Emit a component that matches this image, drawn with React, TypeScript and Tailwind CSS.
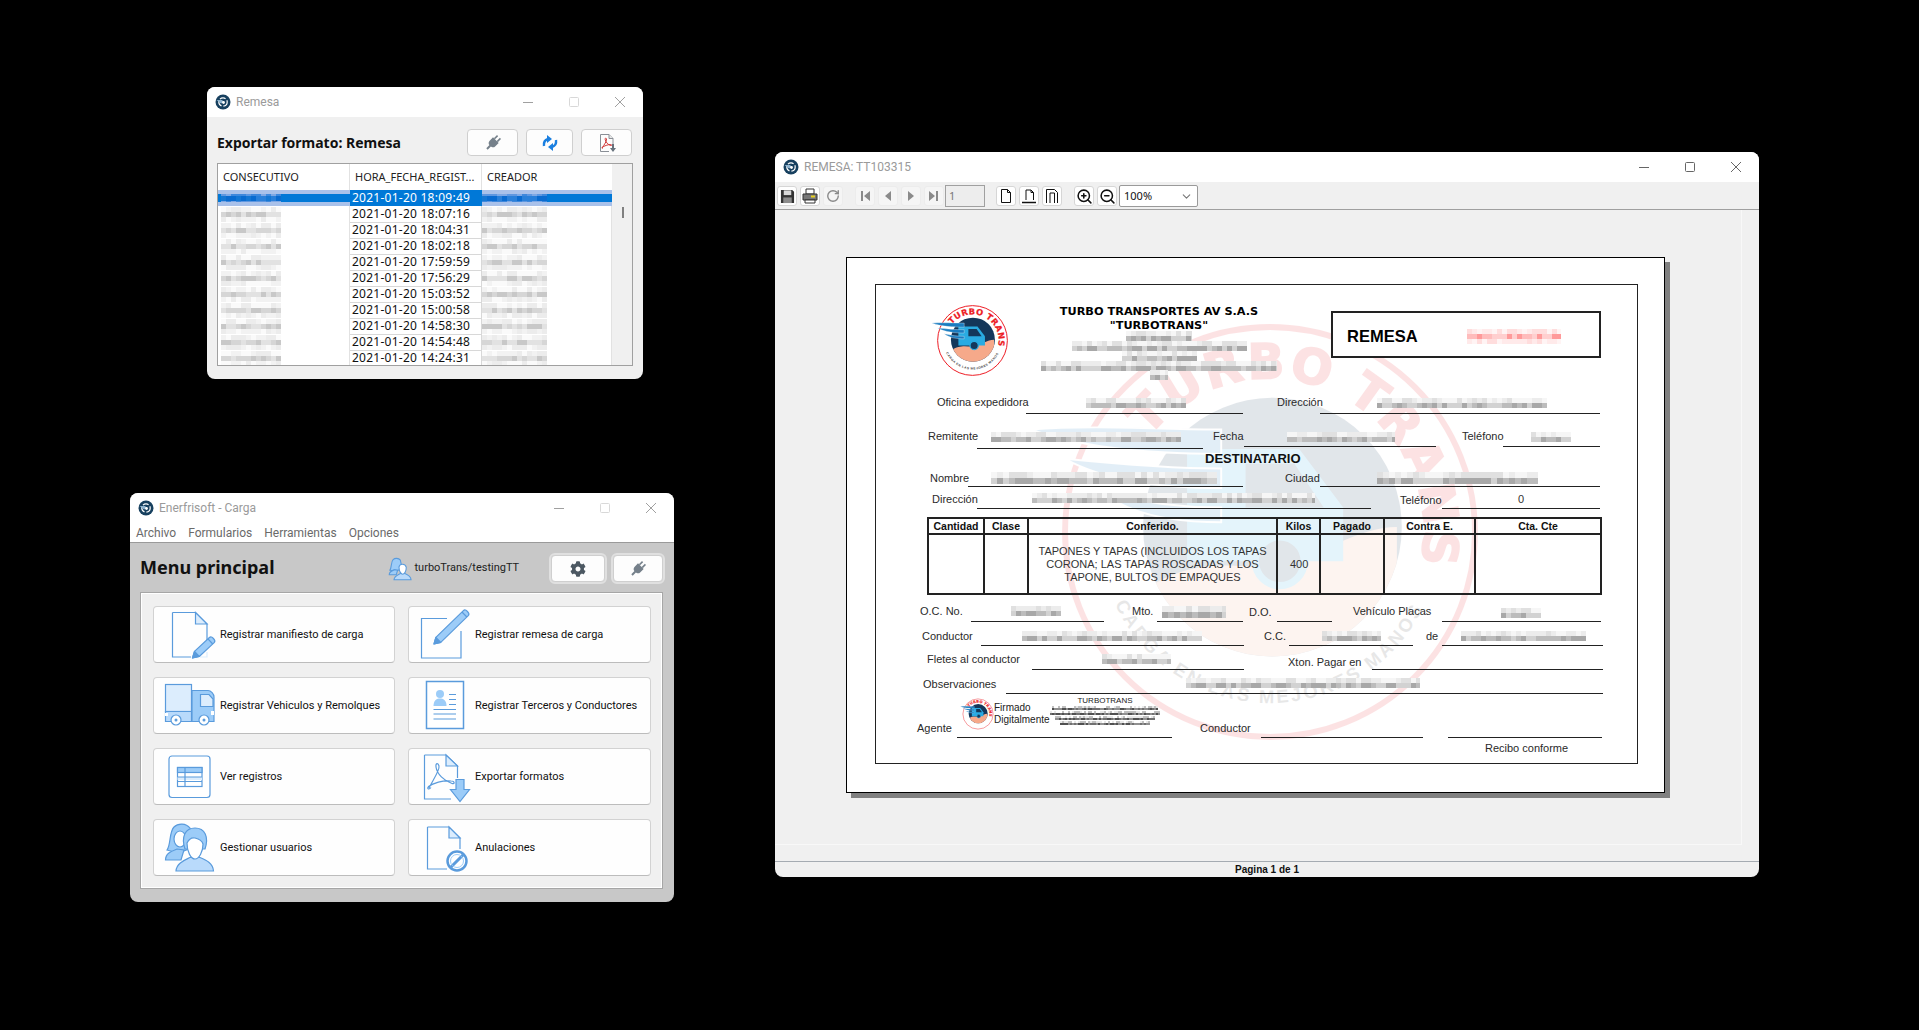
import React from "react";
import { ChevronDown, RotateCw, ZoomIn, ZoomOut } from "lucide-react";
import { FaCog } from "react-icons/fa";

const S = "#5a9bdc";
const M = "#9cccf8";
const P = "#dcedfd";

const dates = [
  "2021-01-20 18:09:49",
  "2021-01-20 18:07:16",
  "2021-01-20 18:04:31",
  "2021-01-20 18:02:18",
  "2021-01-20 17:59:59",
  "2021-01-20 17:56:29",
  "2021-01-20 15:03:52",
  "2021-01-20 15:00:58",
  "2021-01-20 14:58:30",
  "2021-01-20 14:54:48",
  "2021-01-20 14:24:31",
];

const palettes: Record<string, string[]> = {
  gray: ["#f6f6f6", "#ececec", "#e0e0e0", "#d2d2d2", "#bcbcbc", "#a8a8a8"],
  pale: ["#fafafa", "#f2f2f2", "#ececec", "#e2e2e2", "#d6d6d6", "#c8c8c8"],
  red: ["#fff4f4", "#ffeaea", "#ffdddd", "#ffcfcf", "#ffbcbc", "#ff9a9a"],
  blue: ["#7fa8e4", "#5f97e0", "#3f88dc", "#2a80da", "#1577d4", "#0a6bd0"],
  ink: ["#ffffff", "#e8e8e8", "#c0c0c0", "#909090", "#707070", "#505050"],
};

// stands in for the pixelated (censored) fields of the screenshot
const Blur = ({
  w,
  h = 10,
  cell = 5,
  tone = "gray",
  seed = 1,
  className = "",
}: {
  w: number;
  h?: number;
  cell?: number;
  tone?: string;
  seed?: number;
  className?: string;
}) => {
  const cols = Math.ceil(w / cell);
  const rows = Math.ceil(h / cell);
  const colors = palettes[tone];
  const mid = Math.floor(rows / 2);
  const cells = [];
  for (let r = 0; r < rows; r++) {
    for (let c = 0; c < cols; c++) {
      const n = Math.abs(Math.sin((c + 1) * 12.9898 + (r + 1) * 78.233 + seed * 37.7) * 43758.5453) % 1;
      const i = Math.min(5, Math.floor(n * 3) + (r === mid ? 3 : 0));
      cells.push(<rect key={`${r}-${c}`} x={c * cell} y={r * cell} width={cell} height={cell} fill={colors[i]} />);
    }
  }
  return (
    <svg width={w} height={h} className={`block shrink-0 ${className}`}>
      {cells}
    </svg>
  );
};

const AppIcon = () => (
  <svg viewBox="0 0 16 16" className="w-4 h-4 shrink-0">
    <circle cx="8" cy="8" r="7.5" fill="#17405f" />
    <circle cx="8" cy="8" r="4.2" fill="none" stroke="#ffffff" strokeWidth="1.2" strokeDasharray="6 2" />
    <path d="M1.5 6 H7 L9 8 L6 9.5 Z" fill="#8fb4d0" />
    <circle cx="8.5" cy="8.5" r="1.4" fill="#ffffff" />
  </svg>
);

const Controls = ({ dim = false }: { dim?: boolean }) => (
  <div className={`flex ml-auto ${dim ? "text-[#a0a0a0]" : "text-[#666666]"}`}>
    <div className="w-[46px] flex items-center justify-center">
      <svg width="10" height="10" stroke="currentColor">
        <path d="M0 5.5 H10" />
      </svg>
    </div>
    <div className="w-[46px] flex items-center justify-center">
      <svg width="10" height="10" stroke="currentColor" fill="none" className={dim ? "opacity-40" : ""}>
        <rect x="0.5" y="0.5" width="9" height="9" rx="1" />
      </svg>
    </div>
    <div className="w-[46px] flex items-center justify-center">
      <svg width="10" height="10" stroke="currentColor">
        <path d="M0 0 L10 10 M10 0 L0 10" />
      </svg>
    </div>
  </div>
);

const TitleBar = ({ title, dim }: { title: string; dim?: boolean }) => (
  <div className="h-[30px] shrink-0 bg-white flex items-center pl-2">
    <AppIcon />
    <span className="ml-[5px] text-xs text-[#9a9a9a] font-['Roboto',sans-serif]">{title}</span>
    <Controls dim={dim} />
  </div>
);

const PlugIcon = () => (
  <svg viewBox="0 0 18 18" className="w-[18px] h-[18px]">
    <g transform="rotate(45 9 9)" fill="#75808a">
      <rect x="6.2" y="0.5" width="1.6" height="4.5" />
      <rect x="10.2" y="0.5" width="1.6" height="4.5" />
      <path d="M5 5 H13 V10 C13 12 11 13 10 13 V17.5 H8 V13 C7 13 5 12 5 10 Z" />
    </g>
  </svg>
);

const SyncIcon = () => (
  <svg viewBox="0 0 18 18" className="w-[18px] h-[18px]">
    <path d="M3 12 C2.5 8.5 4 6 7 5" fill="none" stroke="#1a7fe0" strokeWidth="2.4" />
    <path d="M6 1 L11 5 L6 9 Z" fill="#1a7fe0" />
    <path d="M15 6 C15.5 9.5 14 12 11 13" fill="none" stroke="#1a7fe0" strokeWidth="2.4" />
    <path d="M12 17 L7 13 L12 9 Z" fill="#1a7fe0" />
  </svg>
);

const PdfSmallIcon = () => (
  <svg viewBox="0 0 20 20" className="w-5 h-5">
    <path d="M3.5 1.5 H12 L16 5.5 V11 M3.5 1.5 V18.5 H12" fill="none" stroke="#8a8f96" />
    <path d="M12 1.5 V5.5 H16" fill="#e8e8e8" stroke="#8a8f96" />
    <path d="M5 15 C7 12 10 8 9.5 6 C9 4.5 8 5 8.2 6.5 C8.7 9 11 12 14 12.5 C15 12.7 15 11.5 13.5 11.5 C11 11.5 7 13 5.5 14.2 C4.6 15 5 15.8 5.8 15" fill="none" stroke="#d23a3a" strokeWidth="1" />
    <path d="M15 11 H17 V15 H19 L16 19 L13 15 H15 Z" fill="#67727c" />
  </svg>
);

const SmallButton = ({ className, outlined, children }: { className: string; outlined?: boolean; children: React.ReactNode }) => (
  <div className={`h-[27px] bg-[#fdfdfd] border border-[#cfcfcf] rounded-[4px] flex items-center justify-center ${outlined ? "outline-2 outline-[#e0e0e0]" : ""} ${className}`}>
    {children}
  </div>
);

const RemesaList = () => (
  <div className="absolute left-[207px] top-[87px] w-[436px] h-[292px] rounded-lg overflow-hidden bg-[#f0f0f0] flex flex-col">
    <TitleBar title="Remesa" dim />
    <div className="h-[27px] mt-3 pl-[10px] pr-[11px] flex items-center">
      <h2 className="text-sm font-bold text-[#111111]">Exportar formato: Remesa</h2>
      <SmallButton className="w-[51px] ml-auto">
        <PlugIcon />
      </SmallButton>
      <SmallButton className="w-[47px] ml-2">
        <SyncIcon />
      </SmallButton>
      <SmallButton className="w-[51px] ml-2">
        <PdfSmallIcon />
      </SmallButton>
    </div>
    <div className="mt-[7px] mx-[10px] h-[203px] border border-[#a0a0a0] flex overflow-hidden">
      <div className="w-[394px] bg-white">
        <div className="h-[26px] grid grid-cols-[132px_132px_130px] text-[11px] text-[#222222]">
          <div className="border-r border-[#e2e2e2] pl-[5px] flex items-center">CONSECUTIVO</div>
          <div className="border-r border-[#e2e2e2] pl-[5px] flex items-center">HORA_FECHA_REGIST...</div>
          <div className="pl-[5px] flex items-center">CREADOR</div>
        </div>
        {dates.map((d, i) => (
          <div key={d} className="h-4 grid grid-cols-[132px_132px_130px] text-xs tracking-[0.25px] text-[#111111]">
            <div className={i === 0 ? "bg-[#0078d7] border-y-4 border-[#a9c1ea] flex items-center pl-[3px] overflow-hidden" : "border-r border-[#e2e2e2] pl-[3px] flex items-center overflow-hidden"}>
              <Blur w={60} h={15} seed={i + 2} tone={i === 0 ? "blue" : "pale"} />
            </div>
            <div className={i === 0 ? "bg-[#0078d7] text-white pl-[2px] flex items-center" : "border-r border-b border-[#d8d8d8] pl-[2px] flex items-center"}>{d}</div>
            <div className={i === 0 ? "bg-[#0078d7] border-y-4 border-[#a9c1ea] flex items-center overflow-hidden" : "flex items-center overflow-hidden border-r border-[#e2e2e2]"}>
              <Blur w={65} h={15} seed={i + 20} tone={i === 0 ? "blue" : "pale"} />
            </div>
          </div>
        ))}
      </div>
      <div className="flex-1 bg-[#f0f0f0] pt-[43px] pl-[10px]">
        <div className="w-[2px] h-[11px] bg-[#808080]" />
      </div>
    </div>
  </div>
);

const Pencil = ({ x1, y1, x2, y2 }: { x1: number; y1: number; x2: number; y2: number }) => {
  const len = Math.hypot(x2 - x1, y2 - y1);
  const angle = (Math.atan2(y2 - y1, x2 - x1) * 180) / Math.PI;
  return (
    <g transform={`translate(${x1} ${y1}) rotate(${angle})`} stroke={S} strokeLinejoin="round">
      <path d={`M0 0 L6 -3.5 H${len - 3} C${len} -3.5 ${len} 3.5 ${len - 3} 3.5 H6 Z`} fill={M} />
      <path d="M0 0 L6 -3.5 V3.5 Z" fill={S} />
      <path d={`M${len - 5} -3.5 V3.5`} fill="none" />
    </g>
  );
};

const CardSvg = ({ children }: { children: React.ReactNode }) => (
  <svg viewBox="0 0 66 57" className="w-[66px] h-[57px] shrink-0" fill="none" strokeWidth="1.2">
    {children}
  </svg>
);

const ManifestIcon = () => (
  <CardSvg>
    <path d="M18.5 6.5 H41.5 L53 18 V36 M18.5 6.5 V51 H37" stroke={S} />
    <path d="M41.5 6.5 V18 H53 Z" fill={P} stroke={S} />
    <path d="M53 46 V51 H46" stroke={P} />
    <Pencil x1={38.5} y1={52} x2={60} y2={32} />
  </CardSvg>
);

const NoteIcon = () => (
  <CardSvg>
    <path d="M38 12.5 H12.5 V52 H52 V25" stroke={S} />
    <Pencil x1={25} y1={38} x2={59} y2={5} />
  </CardSvg>
);

const TruckIcon = () => (
  <CardSvg>
    <rect x="11.5" y="7.5" width="26" height="27" fill={P} stroke={S} />
    <path d="M11.5 34.5 H37.5 V44.5 H11.5 Z" fill="#b9dafb" stroke={S} />
    <path d="M38 13.5 H54 C57 13.5 60 17 60 20 V44.5 H38 Z" fill={M} stroke={S} />
    <path d="M46.5 17.5 H55 L59 22 V29.5 H46.5 Z" fill={P} stroke={S} />
    <rect x="11" y="36" width="3" height="3" fill="#ffffff" />
    <rect x="57" y="34" width="3" height="4" fill="#ffffff" />
    <circle cx="22" cy="43" r="5" fill="#ffffff" stroke={S} />
    <circle cx="22" cy="43" r="1.5" fill={S} />
    <circle cx="50" cy="43" r="5" fill="#ffffff" stroke={S} />
    <circle cx="50" cy="43" r="1.5" fill={S} />
  </CardSvg>
);

const ThirdPartyIcon = () => (
  <CardSvg>
    <rect x="17.5" y="4.5" width="37" height="47" fill="#ffffff" stroke={S} strokeWidth="1.5" />
    <circle cx="31" cy="17" r="4" fill={M} />
    <path d="M24.5 29 C24.5 23 28 21.5 31 21.5 C34 21.5 37.5 23 37.5 29 Z" fill={M} />
    <path d="M40 17.5 H47 M40 22.5 H47 M40 27.5 H47 M24.5 32.5 H47 M24.5 37 H47 M24.5 42 H47" stroke={S} />
  </CardSvg>
);

const TableIcon = () => (
  <CardSvg>
    <rect x="15" y="8" width="41" height="41.5" rx="3" fill="#ffffff" stroke={S} />
    <rect x="23.5" y="19.5" width="24.5" height="19" fill="#ffffff" stroke={S} />
    <rect x="23.5" y="19.5" width="24.5" height="5" fill={M} stroke={S} />
    <rect x="23.5" y="29" width="24.5" height="3" fill={P} />
    <path d="M31 19.5 V38.5 M23.5 29 H48 M23.5 33.5 H48" stroke={S} />
  </CardSvg>
);

const ExportIcon = () => (
  <CardSvg>
    <path d="M15.5 7 H37 L48.5 18 V30 M15.5 7 V51 H42" stroke={S} />
    <path d="M37 7 V18 H48.5 Z" fill={P} stroke={S} />
    <path d="M20 40 C24 32 31 22 30 18 C29 14.5 26.5 15 27 19 C28 26 35 33 43 35.5 C46 36.5 46 33 42 33 C34 32 24 35 19.5 38.5 C17.5 41 20 42 22 39.5" stroke={S} />
    <path d="M47 31.5 H55 V41.5 H60.5 L51 53.5 L41.5 41.5 H47 Z" fill={M} stroke={S} />
  </CardSvg>
);

const UsersIcon = () => (
  <CardSvg>
    <path d="M13 31 C17 26 15 13 20 8 C24 4 32 4 36 9 L40 28 L24 34 Z" fill={M} stroke={S} />
    <ellipse cx="26" cy="20" rx="6" ry="8" fill="#ffffff" stroke={S} />
    <path d="M11.5 41 C11.5 34 18 32 23 30 L30 31 L27 41 Z" fill={M} stroke={S} />
    <path d="M22 52 C22.5 44 31 41 36 38.5 H46 C52 41 59 44 59.5 52 Z" fill="#b9dafb" stroke={S} />
    <path d="M31 30 C27 18 31 9 41 9 C51 9 55 18 51 30 Z" fill={M} stroke={S} />
    <path d="M33 24 C35 20 37 18 41 19 C45 20 48 21 49 25 C49 33 45 40 41 40 C37 40 33 33 33 24 Z" fill="#ffffff" stroke={S} />
  </CardSvg>
);

const CancelIcon = () => (
  <CardSvg>
    <path d="M18.5 8 H40 L51 19 V30 M18.5 8 V50 H38" stroke={S} />
    <path d="M40 8 V19 H51 Z" fill={P} stroke={S} />
    <circle cx="48" cy="42" r="9.5" fill="#ffffff" stroke={S} strokeWidth="2.5" />
    <path d="M42 48 L54 36" stroke={S} strokeWidth="3" />
    <circle cx="48" cy="42" r="6.5" fill="none" stroke={M} strokeWidth="1" />
  </CardSvg>
);

const menuCards = [
  { label: "Registrar manifiesto de carga", icon: <ManifestIcon /> },
  { label: "Registrar remesa de carga", icon: <NoteIcon /> },
  { label: "Registrar Vehiculos y Remolques", icon: <TruckIcon /> },
  { label: "Registrar Terceros y Conductores", icon: <ThirdPartyIcon /> },
  { label: "Ver registros", icon: <TableIcon /> },
  { label: "Exportar formatos", icon: <ExportIcon /> },
  { label: "Gestionar usuarios", icon: <UsersIcon /> },
  { label: "Anulaciones", icon: <CancelIcon /> },
];

const UserSmallIcon = () => (
  <svg viewBox="0 0 66 57" className="w-[30px] h-[26px]" fill="none" strokeWidth="2.4">
    <path d="M13 31 C17 26 15 13 20 8 C24 4 32 4 36 9 L40 28 L24 34 Z" fill={M} stroke={S} />
    <path d="M11.5 41 C11.5 34 18 32 23 30 L30 31 L27 41 Z" fill={M} stroke={S} />
    <path d="M22 52 C22.5 44 31 41 36 38.5 H46 C52 41 59 44 59.5 52 Z" fill="#b9dafb" stroke={S} />
    <path d="M33 24 C35 16 47 16 49 25 C49 33 45 40 41 40 C37 40 33 33 33 24 Z" fill="#ffffff" stroke={S} />
  </svg>
);

const MainMenu = () => (
  <div className="absolute left-[130px] top-[493px] w-[544px] h-[409px] rounded-lg overflow-hidden bg-[#c8c8c8] flex flex-col">
    <TitleBar title="Enerfrisoft - Carga" dim />
    <div className="h-[20px] pt-px bg-white border-b border-[#9a9a9a] shrink-0 flex items-center text-xs text-[#6a6a6a] pl-[6px] gap-[12px] font-['Roboto',sans-serif]">
      <span>Archivo</span>
      <span>Formularios</span>
      <span>Herramientas</span>
      <span>Opciones</span>
    </div>
    <div className="h-[27px] mt-3 pl-[11px] pr-[11px] flex items-center">
      <h1 className="text-lg font-bold text-[#111111] mb-[3px] -ml-px">Menu principal</h1>
      <div className="ml-[109px]">
        <UserSmallIcon />
      </div>
      <span className="ml-px text-[11px] text-[#222222] font-['Roboto',sans-serif]">turboTrans/testingTT</span>
      <SmallButton outlined className="w-[54px] ml-auto">
        <FaCog className="text-[#4c5862] text-base" />
      </SmallButton>
      <SmallButton outlined className="w-[50px] ml-2">
        <PlugIcon />
      </SmallButton>
    </div>
    <div className="mt-[10px] ml-[10px] w-[523px] h-[297px] border border-[#a6a6a6] outline outline-white -outline-offset-2 bg-[#f0f0f0] pt-[13px] pl-[12px]">
      <div className="grid grid-cols-[242px_243px] auto-rows-[57px] gap-x-[13px] gap-y-[14px]">
        {menuCards.map((card) => (
          <div key={card.label} className="bg-[#fefefe] border border-[#d2d2d2] border-b-[#bcbcbc] rounded-[4px] flex items-center text-[11px] text-[#111111] font-['Roboto',sans-serif]">
            {card.icon}
            <span className="whitespace-nowrap pt-px">{card.label}</span>
          </div>
        ))}
      </div>
    </div>
  </div>
);

const ToolButton = ({ off, children }: { off?: boolean; children: React.ReactNode }) => (
  <div className={`w-5 h-5 rounded-[3px] border flex items-center justify-center shrink-0 ${off ? "bg-[#f5f5f5] border-[#ececec]" : "bg-white border-[#d6d6d6]"}`}>
    {children}
  </div>
);

const NavIcon = ({ d }: { d: string }) => (
  <svg viewBox="0 0 12 12" className="w-3 h-3" fill="#8a8a8a">
    <path d={d} />
  </svg>
);

const PageIcon = ({ bottom, top }: { bottom?: boolean; top?: boolean }) => (
  <svg viewBox="0 0 16 16" className="w-4 h-4" fill="none" stroke="#111111">
    {top ? <path d="M2.5 15 V1.5 H10.5 L13.5 4.5 V15 M6 15 V5 H10.5 V15" /> : null}
    {!top ? <path d={bottom ? "M5 12 V2 H10 L12.5 4.5 V12 M10 2 V4.5 H12.5" : "M3.5 14.5 V1.5 H9.5 L12.5 4.5 V14.5 Z M9.5 1.5 V4.5 H12.5"} /> : null}
    {bottom ? <path d="M1 14.5 H15" strokeWidth="1.4" /> : null}
  </svg>
);

const Toolbar = () => (
  <div className="h-[28px] pt-px shrink-0 bg-[#f0f0f0] border-b border-[#9f9f9f] flex items-center pl-[2px] gap-[3px]">
    <ToolButton>
      <svg viewBox="0 0 16 16" className="w-[15px] h-[15px]">
        <path d="M1 1 H13 L15 3 V15 H1 Z" fill="#333333" />
        <rect x="4" y="1.5" width="8" height="5" fill="#d8d8d8" />
        <rect x="3.5" y="9" width="9" height="6" fill="#8c8c8c" />
      </svg>
    </ToolButton>
    <ToolButton>
      <svg viewBox="0 0 16 16" className="w-4 h-4">
        <path d="M4 1 H12 V6 H4 Z" fill="#ffffff" stroke="#333333" />
        <path d="M1 6 H15 V12 H1 Z" fill="#777777" stroke="#333333" />
        <rect x="9" y="7.5" width="4" height="2" fill="#e8d020" />
        <path d="M3 12 H13 V15 H3 Z" fill="#ffffff" stroke="#333333" />
      </svg>
    </ToolButton>
    <ToolButton off>
      <RotateCw size={14} strokeWidth={2.4} color="#8a8a8a" />
    </ToolButton>
    <div className="w-[6px]" />
    <ToolButton off>
      <NavIcon d="M2 1 H4 V11 H2 Z M11 1 V11 L5 6 Z" />
    </ToolButton>
    <ToolButton off>
      <NavIcon d="M9 1 V11 L3 6 Z" />
    </ToolButton>
    <ToolButton off>
      <NavIcon d="M3 1 V11 L9 6 Z" />
    </ToolButton>
    <ToolButton off>
      <NavIcon d="M1 1 V11 L7 6 Z M8 1 H10 V11 H8 Z" />
    </ToolButton>
    <div className="w-10 h-[22px] ml-[-2px] border border-[#a0a0a0] bg-[#ededed] text-[11px] text-[#777777] pl-[3px] flex items-center">1</div>
    <div className="w-[5px]" />
    <ToolButton>
      <PageIcon />
    </ToolButton>
    <ToolButton>
      <PageIcon bottom />
    </ToolButton>
    <ToolButton>
      <PageIcon top />
    </ToolButton>
    <div className="w-[6px]" />
    <ToolButton>
      <ZoomIn size={17} strokeWidth={2.2} color="#111111" />
    </ToolButton>
    <ToolButton>
      <ZoomOut size={17} strokeWidth={2.2} color="#111111" />
    </ToolButton>
    <div className="w-[79px] h-[22px] ml-[-1px] border border-[#9a9a9a] bg-white rounded-[2px] text-[11px] text-[#111111] pl-1 pr-1 flex items-center justify-between">
      100%
      <ChevronDown size={13} color="#777777" />
    </div>
  </div>
);

// company logo: also used, very pale, as the watermark of the printed form
const Logo = ({ id, className, micro }: { id: string; className: string; micro?: boolean }) => (
  <svg viewBox="0 0 100 100" className={className}>
    <defs>
      <path id={`${id}-top`} d="M25.2 30.6 A31.5 31.5 0 0 1 80.4 58.2" />
      <path id={`${id}-bottom`} d="M17.1 62 A35 35 0 0 0 82.9 62" />
      <clipPath id={`${id}-clip`}>
        <circle cx="50.5" cy="49" r="26.5" />
      </clipPath>
    </defs>
    <circle cx="50" cy="50" r="42" fill="#ffffff" stroke="#ed1c24" strokeWidth="1.2" />
    <circle cx="50.5" cy="49" r="26.5" fill="#14375a" />
    <g clipPath={`url(#${id}-clip)`}>
      <path d="M24 62 C36 54 44 58 52 57 C60 55 68 49 76 49 V80 H24 Z" fill="#f6a98a" />
    </g>
    <path d="M33 33 H56 L65 45 V56 H33 Z" fill="#29abe2" />
    <path d="M45 36 H55 L61 45 H45 Z" fill="#14375a" />
    <circle cx="52" cy="56" r="5" fill="#14375a" stroke="#29abe2" strokeWidth="1.5" />
    <path d="M1 29 C14 28 28 29 40 29 L40 34 C26 34 12 33 1 29 Z" fill="#1a7cc0" stroke="#ffffff" strokeWidth="0.4" />
    <path d="M8 35 C18 36 30 37 40 37 L40 41 C30 41 17 40 8 35 Z" fill="#1a7cc0" stroke="#ffffff" strokeWidth="0.4" />
    <path d="M16 42 C24 44 32 45 40 45 L40 48 C32 48 22 47 16 42 Z" fill="#1a7cc0" stroke="#ffffff" strokeWidth="0.4" />
    <text fontFamily="DejaVu Sans, sans-serif" fontWeight="700" fontSize="10" fill="#ed1c24" stroke="#ed1c24" strokeWidth="0.3">
      <textPath href={`#${id}-top`} textLength="84" lengthAdjust="spacing">
        TURBO TRANS
      </textPath>
    </text>
    {micro ? null : (
      <text fontFamily="Liberation Sans, Arial, sans-serif" fontWeight="700" fontSize="3.8" fill="#444444">
        <textPath href={`#${id}-bottom`} startOffset="3" textLength="78" lengthAdjust="spacing">
          CARGA EN LAS MEJORES MANOS
        </textPath>
      </text>
    )}
  </svg>
);

const Lbl = ({ className, children }: { className: string; children: React.ReactNode }) => (
  <span className={`shrink-0 text-[11px] leading-[14px] text-[#2a2a2a] whitespace-nowrap ${className}`}>{children}</span>
);

const Field = ({ className, children }: { className: string; children?: React.ReactNode }) => (
  <div className={`shrink-0 border-b border-[#222222] flex items-end ${className}`}>{children}</div>
);

const tableCols = "grid grid-cols-[56px_44px_249px_43px_64px_91px_124px]";

const CargoTable = () => (
  <div className="mt-2 ml-[51px] w-[675px] border-2 border-[#222222] text-[11px] text-[#333333]">
    <div className={`${tableCols} h-[16px] border-b-2 border-[#222222] font-bold text-[10.5px] text-center leading-[14px] text-[#111111]`}>
      <div className="border-r-2 border-[#222222]">Cantidad</div>
      <div className="border-r-2 border-[#222222]">Clase</div>
      <div className="border-r-2 border-[#222222]">Conferido.</div>
      <div className="border-r-2 border-[#222222]">Kilos</div>
      <div className="border-r-2 border-[#222222]">Pagado</div>
      <div className="border-r-2 border-[#222222]">Contra E.</div>
      <div>Cta. Cte</div>
    </div>
    <div className={`${tableCols} h-[58px]`}>
      <div className="border-r-2 border-[#222222]" />
      <div className="border-r-2 border-[#222222]" />
      <div className="border-r-2 border-[#222222] text-center leading-[13px] pt-[10px] whitespace-pre-line">
        {"TAPONES Y TAPAS (INCLUIDOS LOS TAPAS\nCORONA;  LAS TAPAS ROSCADAS Y LOS\nTAPONE, BULTOS DE EMPAQUES"}
      </div>
      <div className="border-r-2 border-[#222222] pl-3 pt-[23px] leading-[13px]">400</div>
      <div className="border-r-2 border-[#222222]" />
      <div className="border-r-2 border-[#222222]" />
      <div />
    </div>
  </div>
);

const Report = () => (
  <div className="w-[819px] h-[536px] bg-white border border-black shadow-[5px_5px_0_#808080] pt-[26px] pl-[28px] font-['Liberation_Sans',Arial,sans-serif]">
    <div className="relative w-[763px] h-[480px] border border-[#222222] overflow-hidden">
      <Logo id="mark" className="absolute left-[150px] top-[3px] w-[488px] h-[488px] opacity-[0.12]" />
      <div className="relative">
        <div className="h-[93px] flex items-start">
          <Logo id="head" className="w-[83px] h-[83px] ml-[55px] mt-[14px] shrink-0" />
          <div className="w-[238px] ml-[26px] pt-[20px] flex flex-col items-center shrink-0">
            <div className="font-['DejaVu_Sans',sans-serif] font-bold text-[11.3px] leading-[14px] text-black whitespace-nowrap">TURBO TRANSPORTES AV S.A.S</div>
            <div className="font-['DejaVu_Sans',sans-serif] font-bold text-[11.3px] leading-[14px] text-black whitespace-nowrap">"TURBOTRANS"</div>
            <Blur w={66} h={10} seed={3} className="-mt-[2px]" />
            <Blur w={175} h={10} seed={4} />
            <Blur w={75} h={10} seed={5} />
            <Blur w={236} h={10} seed={6} />
            <Blur w={18} h={10} seed={7} className="-mt-[1px]" />
          </div>
          <div className="w-[270px] h-[47px] ml-[53px] mt-[26px] border-2 border-[#222222] bg-white flex items-center pl-[14px] pt-[3px] shrink-0">
            <span className="w-[120px] font-bold text-[16.5px] text-black">REMESA</span>
            <Blur w={94} h={15} seed={8} tone="red" />
          </div>
        </div>

        <div className="h-[36px] flex items-end">
          <Lbl className="ml-[61px] w-[89px] pb-[5px]">Oficina expedidora</Lbl>
          <Field className="w-[217px] pl-[60px] pb-[5px]">
            <Blur w={100} seed={9} />
          </Field>
          <Lbl className="ml-[34px] w-[43px] pb-[5px]">Dirección</Lbl>
          <Field className="w-[280px] pl-[57px] pb-[5px]">
            <Blur w={170} seed={10} />
          </Field>
        </div>

        <div className="h-[35px] flex items-end">
          <Lbl className="ml-[52px] w-[49px] pb-[6px]">Remitente</Lbl>
          <Field className="w-[226px] pl-[14px] pb-[6px]">
            <Blur w={190} seed={11} />
          </Field>
          <Lbl className="ml-[10px] w-[31px] pb-[6px]">Fecha</Lbl>
          <Field className="w-[192px] pl-[43px] pb-[4px] mb-[2px]">
            <Blur w={108} seed={12} />
          </Field>
          <Lbl className="ml-[26px] w-[41px] pb-[6px]">Teléfono</Lbl>
          <Field className="w-[97px] pl-[28px] pb-[4px] mb-[2px]">
            <Blur w={40} seed={13} />
          </Field>
        </div>

        <div className="h-[18px] pl-[329px] pt-[2px] font-bold text-[13px] leading-[16px] text-[#111111]">DESTINATARIO</div>

        <div className="h-[20px] flex items-end">
          <Lbl className="ml-[54px] w-[38px] pb-[2px]">Nombre</Lbl>
          <Field className="w-[275px] pl-[23px] pb-[2px]">
            <Blur w={226} h={12} cell={6} seed={14} />
          </Field>
          <Lbl className="ml-[42px] w-[35px] pb-[2px]">Ciudad</Lbl>
          <Field className="w-[280px] pl-[57px] pb-[2px]">
            <Blur w={161} h={12} cell={6} seed={15} />
          </Field>
        </div>

        <div className="h-[22px] flex items-end">
          <Lbl className="ml-[56px] w-[45px] pb-[3px]">Dirección</Lbl>
          <Field className="w-[394px] pl-[55px] pb-[5px]">
            <Blur w={283} seed={16} />
          </Field>
          <Lbl className="ml-[29px] w-[42px] pb-[2px]">Teléfono</Lbl>
          <Field className="w-[158px] pl-[76px] text-[11px] leading-[14px] pb-[2px] text-[#333333]">0</Field>
        </div>

        <CargoTable />

        <div className="h-[27px] flex items-end">
          <Lbl className="ml-[44px] w-[51px] pb-[4px]">O.C. No.</Lbl>
          <Field className="w-[133px] pl-[40px] pb-[5px]">
            <Blur w={50} seed={17} />
          </Field>
          <Lbl className="ml-[28px] w-[25px] pb-[4px]">Mto.</Lbl>
          <Field className="w-[86px] pl-[5px] pb-[3px]">
            <Blur w={64} h={12} cell={6} seed={18} />
          </Field>
          <Lbl className="ml-[6px] w-[28px] pb-[3px]">D.O.</Lbl>
          <Field className="w-[55px]" />
          <Lbl className="ml-[21px] w-[89px] pb-[4px]">Vehículo Placas</Lbl>
          <Field className="w-[159px] pl-[59px] pb-[3px]">
            <Blur w={40} seed={19} />
          </Field>
        </div>

        <div className="h-[24px] flex items-end">
          <Lbl className="ml-[46px] w-[59px] pb-[3px]">Conductor</Lbl>
          <Field className="w-[263px] pl-[41px] pb-[4px]">
            <Blur w={180} seed={20} />
          </Field>
          <Lbl className="ml-[20px] w-[25px] pb-[3px]">C.C.</Lbl>
          <Field className="w-[124px] pl-[33px] pb-[4px]">
            <Blur w={59} seed={21} />
          </Field>
          <Lbl className="ml-[13px] w-[16px] pb-[3px]">de</Lbl>
          <Field className="w-[161px] pl-[19px] pb-[4px]">
            <Blur w={125} seed={22} />
          </Field>
        </div>

        <div className="h-[24px] flex items-end">
          <Lbl className="ml-[51px] w-[105px] pb-[4px]">Fletes al conductor</Lbl>
          <Field className="w-[212px] pl-[70px] pb-[5px]">
            <Blur w={69} seed={23} />
          </Field>
          <Lbl className="ml-[44px] w-[84px] pb-[1px]">Xton. Pagar en</Lbl>
          <Field className="w-[231px]" />
        </div>

        <div className="h-[24px] flex items-end">
          <Lbl className="ml-[47px] w-[83px] pb-[3px]">Observaciones</Lbl>
          <Field className="w-[597px] pl-[180px] pb-[5px]">
            <Blur w={234} seed={24} />
          </Field>
        </div>

        <div className="h-[44px] flex items-end">
          <Lbl className="ml-[41px] w-[40px] pb-[3px]">Agente</Lbl>
          <Field className="w-[215px] h-[42px] items-start pl-[3px]">
            <Logo id="sign" micro className="w-[36px] h-[36px] shrink-0" />
            <div className="-ml-[2px] mt-[6px] text-[10px] leading-[12px] text-[#222222] w-[56px]">
              Firmado
              <br />
              Digitalmente
            </div>
            <div className="w-[110px] flex flex-col items-center">
              <span className="text-[8px] leading-[10px] text-[#222222]">TURBOTRANS</span>
              <Blur w={106} h={4} cell={2} tone="ink" seed={25} />
              <Blur w={110} h={4} cell={2} tone="ink" seed={26} className="mt-px" />
              <Blur w={100} h={4} cell={2} tone="ink" seed={27} className="mt-px" />
              <Blur w={90} h={4} cell={2} tone="ink" seed={28} className="mt-px" />
            </div>
          </Field>
          <Lbl className="ml-[28px] w-[61px] pb-[3px]">Conductor</Lbl>
          <Field className="w-[162px]" />
          <Field className="w-[154px] ml-[25px]" />
        </div>

        <Lbl className="block ml-[609px] mt-[3px] w-[80px]">Recibo conforme</Lbl>
      </div>
    </div>
  </div>
);

const Preview = () => (
  <div className="absolute left-[775px] top-[152px] w-[984px] h-[725px] rounded-lg overflow-hidden bg-[#f0f0f0] flex flex-col">
    <TitleBar title="REMESA: TT103315" />
    <Toolbar />
    <div className="h-[652px] shrink-0 border-b border-[#a5abb2]">
      <div className="w-[967px] h-[635px] border-r border-b border-[#f8f8f8] pt-[47px] pl-[71px]">
        <Report />
      </div>
    </div>
    <div className="flex-1 flex items-center justify-center text-[10px] font-bold text-[#111111] font-['Liberation_Sans',Arial,sans-serif]">Pagina 1 de 1</div>
  </div>
);

export default function App() {
  return (
    <div className="relative w-screen h-screen overflow-hidden bg-black font-['Noto_Sans',sans-serif]">
      <RemesaList />
      <MainMenu />
      <Preview />
    </div>
  );
}
